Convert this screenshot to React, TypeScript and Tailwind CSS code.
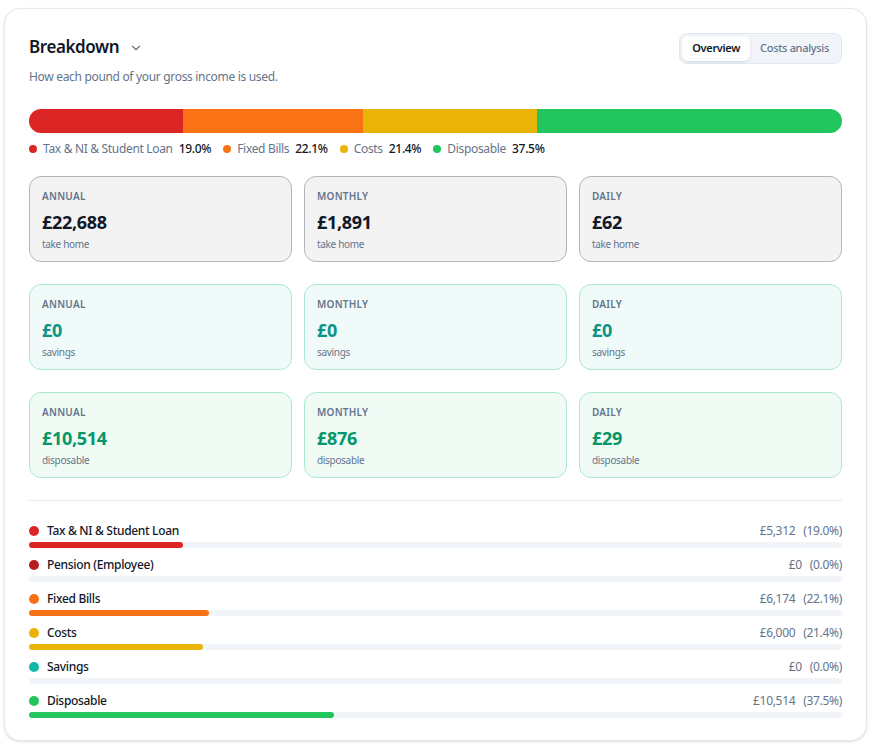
import React from "react";
import { ChevronDown } from "lucide-react";

// --- data ---
type Slice = { label: string; pct: number; amount: string; color: string };

const slices: Slice[] = [
  { label: "Tax & NI & Student Loan", pct: 19.0, amount: "£5,312", color: "bg-[#dc2626]" },
  { label: "Pension (Employee)", pct: 0, amount: "£0", color: "bg-[#b91c1c]" },
  { label: "Fixed Bills", pct: 22.1, amount: "£6,174", color: "bg-[#f97316]" },
  { label: "Costs", pct: 21.4, amount: "£6,000", color: "bg-[#eab308]" },
  { label: "Savings", pct: 0, amount: "£0", color: "bg-[#14b8a6]" },
  { label: "Disposable", pct: 37.5, amount: "£10,514", color: "bg-[#22c55e]" },
];

const legend = [
  { label: "Tax & NI & Student Loan", pct: "19.0%", dot: "bg-[#dc2626]" },
  { label: "Fixed Bills", pct: "22.1%", dot: "bg-[#f97316]" },
  { label: "Costs", pct: "21.4%", dot: "bg-[#eab308]" },
  { label: "Disposable", pct: "37.5%", dot: "bg-[#22c55e]" },
];

type Tone = "plain" | "savings" | "disposable";

const tones: Record<Tone, { box: string; value: string }> = {
  plain: { box: "bg-[#f3f3f3] border-[#b4b4bc]", value: "text-[#111827]" },
  savings: { box: "bg-[#f0faf8] border-[#a9e7d9]", value: "text-[#0d9488]" },
  disposable: { box: "bg-[#f0fbf6] border-[#aae9cf]", value: "text-[#059669]" },
};

const groups: { tone: Tone; sub: string; values: string[] }[] = [
  { tone: "plain", sub: "take home", values: ["£22,688", "£1,891", "£62"] },
  { tone: "savings", sub: "savings", values: ["£0", "£0", "£0"] },
  { tone: "disposable", sub: "disposable", values: ["£10,514", "£876", "£29"] },
];

const periods = ["Annual", "Monthly", "Daily"];

function StatCard({ period, value, sub, tone }: { period: string; value: string; sub: string; tone: Tone }) {
  const t = tones[tone];
  return (
    <div className={`rounded-xl border px-3 pt-[11px] pb-[9px] ${t.box}`}>
      <div className="text-[10px] leading-4 font-semibold uppercase tracking-wide text-[#64748b]">{period}</div>
      <div className={`mt-1 text-lg leading-7 font-bold ${t.value}`}>{value}</div>
      <div className="text-[10px] leading-4 text-[#64748b]">{sub}</div>
    </div>
  );
}

export default function App() {
  return (
    <div className="min-h-screen bg-white pl-1 pt-2 font-['Noto_Sans',sans-serif] tracking-[-0.02em]">
      <div className="w-[863px] rounded-2xl border border-gray-200 bg-white px-6 pt-6 pb-[22px] shadow-sm">
        {/* header */}
        <div className="flex items-start justify-between">
          <div>
            <div className="flex h-[30px] items-center gap-2.5">
              <h2 className="-mt-0.5 text-[17px] font-semibold tracking-tight text-[#111827]">Breakdown</h2>
              <ChevronDown className="h-3.5 w-3.5 text-[#64748b]" strokeWidth={2} />
            </div>
            <p className="mt-1.5 text-xs leading-4 text-[#64748b]">How each pound of your gross income is used.</p>
          </div>
          <div className="flex rounded-lg border border-slate-200 bg-[#f1f5f9] p-0.5">
            <button className="rounded-md bg-white px-2.5 py-1 text-[11px] font-semibold text-[#111827] shadow-sm">Overview</button>
            <button className="px-2.5 py-1 text-[11px] font-medium text-[#64748b]">Costs analysis</button>
          </div>
        </div>

        {/* stacked bar */}
        <div className="mt-6 flex h-6 overflow-hidden rounded-full">
          <div className="bg-[#dc2626]" style={{ width: "19%" }} />
          <div className="bg-[#f97316]" style={{ width: "22.1%" }} />
          <div className="bg-[#eab308]" style={{ width: "21.4%" }} />
          <div className="flex-1 bg-[#22c55e]" />
        </div>
        <div className="mt-2 flex items-center gap-3 text-xs leading-4">
          {legend.map((l) => (
            <div key={l.label} className="flex items-center gap-1.5">
              <span className={`h-2 w-2 rounded-full ${l.dot}`} />
              <span className="text-[#64748b]">{l.label}</span>
              <span className="font-medium text-[#111827]">{l.pct}</span>
            </div>
          ))}
        </div>

        {/* summary cards */}
        <div className="mt-[19px] flex flex-col gap-[22px]">
          {groups.map((g) => (
            <div key={g.tone} className="grid grid-cols-3 gap-3">
              {periods.map((p, i) => (
                <StatCard key={p} period={p} value={g.values[i]} sub={g.sub} tone={g.tone} />
              ))}
            </div>
          ))}
        </div>

        {/* per-category bars */}
        <div className="mt-[22px] flex flex-col gap-[9px] border-t border-slate-200 pt-[22px]">
          {slices.map((s) => (
            <div key={s.label}>
              <div className="flex items-center justify-between text-xs leading-4">
                <div className="flex items-center gap-2">
                  <span className={`h-2.5 w-2.5 rounded-full ${s.color}`} />
                  <span className="font-medium text-[#111827]">{s.label}</span>
                </div>
                <div className="flex gap-2 text-[#64748b]">
                  <span>{s.amount}</span>
                  <span>({s.pct.toFixed(1)}%)</span>
                </div>
              </div>
              <div className="mt-[3px] h-1.5 rounded-full bg-[#f1f5f9]">
                <div className={`h-full rounded-full ${s.color}`} style={{ width: `${s.pct}%` }} />
              </div>
            </div>
          ))}
        </div>
      </div>
    </div>
  );
}
